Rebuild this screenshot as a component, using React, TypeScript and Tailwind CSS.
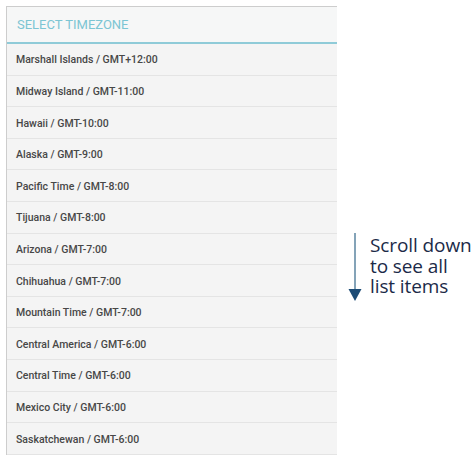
const zones = [
  "Marshall Islands / GMT+12:00",
  "Midway Island / GMT-11:00",
  "Hawaii / GMT-10:00",
  "Alaska / GMT-9:00",
  "Pacific Time / GMT-8:00",
  "Tijuana / GMT-8:00",
  "Arizona / GMT-7:00",
  "Chihuahua / GMT-7:00",
  "Mountain Time / GMT-7:00",
  "Central America / GMT-6:00",
  "Central Time / GMT-6:00",
  "Mexico City / GMT-6:00",
  "Saskatchewan / GMT-6:00",
];

function ScrollHint() {
  return (
    <div className="mt-[227px] ml-[11px] flex flex-row items-start gap-[8px]">
      <svg width="14" height="68" viewBox="0 0 14 68" className="shrink-0">
        <line x1="7" y1="0" x2="7" y2="58" stroke="#5b84a0" strokeWidth="1.5" />
        <polygon points="0.5,56 13.5,56 7,68" fill="#1d4c76" />
      </svg>
      <div className="mt-[2px] flex flex-col font-['Open_Sans',sans-serif] text-[19px] tracking-[-0.1px] text-[#1b2a48]">
        <span className="block h-[20.6px] leading-[20.6px]">Scroll down</span>
        <span className="block h-[20.6px] leading-[20.6px]">to see all</span>
        <span className="block h-[20.6px] leading-[20.6px]">list items</span>
      </div>
    </div>
  );
}

export default function App() {
  return (
    <div className="h-[457px] w-[476px] overflow-hidden bg-white pt-[6px] pl-[6px]">
      <div className="flex flex-row items-start">
        <section className="w-[331px] shrink-0 border-t border-l border-[#cdcdcd] bg-[#f4f4f4] font-['Roboto',sans-serif]">
          <header className="flex h-[37px] items-center border-b-2 border-[#8fcbd8] bg-[#f6f7f7] pl-[10px]">
            <h2 className="text-[13px] text-[#7cc5d3]">SELECT TIMEZONE</h2>
          </header>
          <ul className="flex flex-col">
            {zones.map((zone) => (
              <li
                key={zone}
                className="flex h-[31.6px] items-center border-b border-[#e4e4e4] pt-[2px] pl-[9px]"
              >
                <span className="text-[10.5px] font-medium text-[#474747]">{zone}</span>
              </li>
            ))}
          </ul>
        </section>
        <ScrollHint />
      </div>
    </div>
  );
}
